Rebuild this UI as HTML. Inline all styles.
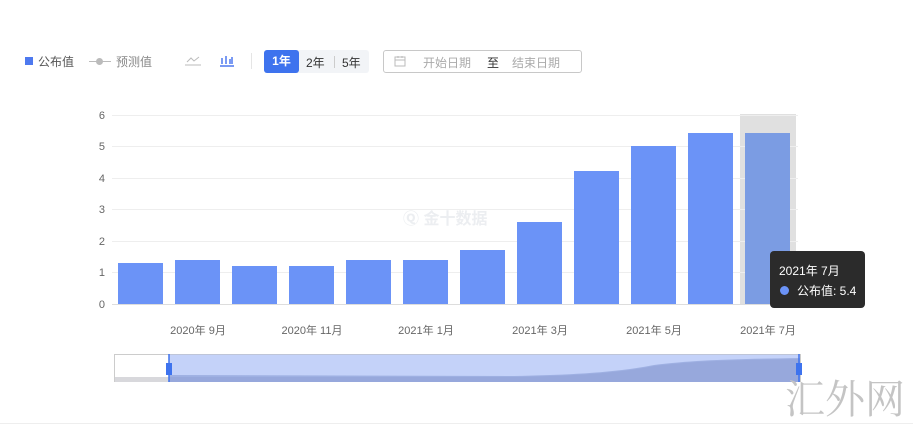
<!DOCTYPE html>
<html><head><meta charset="utf-8"><style>
body{margin:0;width:913px;height:425px;background:#fff;font-family:"Liberation Sans","Noto Sans CJK SC",sans-serif;position:relative;overflow:hidden}
.a{position:absolute}
.t{font-size:12px;color:#555}
.yl{position:absolute;right:808px;font-size:11px;color:#666}
.xl{position:absolute;font-size:11px;color:#666;width:80px;text-align:center;top:322px}
</style></head><body>
<div class="a" style="left:25px;top:57px;width:8px;height:8px;background:#4e79ef"></div>
<div class="a t" style="left:38px;top:53px">公布值</div>
<div class="a" style="left:89px;top:61px;width:22px;height:1px;background:#bbb"></div>
<div class="a" style="left:96px;top:58px;width:7px;height:7px;border-radius:50%;background:#bbb"></div>
<div class="a t" style="left:116px;top:53px;color:#888">预测值</div>
<svg class="a" style="left:184px;top:53px" width="18" height="14"><path d="M1 12h16M3 9l4-4 3 3 5-4" stroke="#bbb" fill="none"/></svg>
<svg class="a" style="left:219px;top:53px" width="16" height="14"><path d="M1 13h14M3 5v6M7 3v8M11 6v5M13 4v7" stroke="#4e79ef" stroke-width="1.5" fill="none"/></svg>
<div class="a" style="left:251px;top:53px;width:1px;height:16px;background:#e5e5e5"></div>
<div class="a" style="left:264px;top:50px;width:105px;height:23px;background:#f2f4f7;border-radius:3px"></div>
<div class="a" style="left:264px;top:50px;width:35px;height:23px;background:#3e73ee;border-radius:3px;color:#fff;font-size:12px;font-weight:bold;text-align:center;line-height:23px">1年</div>
<div class="a t" style="left:306px;top:54px;color:#333">2年</div>
<div class="a" style="left:334px;top:56px;width:1px;height:12px;background:#ccc"></div>
<div class="a t" style="left:342px;top:54px;color:#333">5年</div>
<div class="a" style="left:383px;top:50px;width:197px;height:21px;border:1px solid #c8c8c8;border-radius:3px"></div>
<svg class="a" style="left:394px;top:55px" width="12" height="12"><rect x="1" y="2" width="10" height="9" fill="none" stroke="#bbb"/><path d="M1 5h10M4 1v2M8 1v2" stroke="#bbb"/></svg>
<div class="a t" style="left:423px;top:54px;color:#aaa">开始日期</div>
<div class="a t" style="left:487px;top:54px;color:#333">至</div>
<div class="a t" style="left:512px;top:54px;color:#aaa">结束日期</div>

<div class="a" style="left:740px;top:114px;width:56px;height:190px;background:#e0e0e0"></div>
<div class="a" style="left:112px;top:115px;width:686px;height:1px;background:#eee"></div>
<div class="a" style="left:112px;top:146px;width:686px;height:1px;background:#eee"></div>
<div class="a" style="left:112px;top:178px;width:686px;height:1px;background:#eee"></div>
<div class="a" style="left:112px;top:209px;width:686px;height:1px;background:#eee"></div>
<div class="a" style="left:112px;top:241px;width:686px;height:1px;background:#eee"></div>
<div class="a" style="left:112px;top:272px;width:686px;height:1px;background:#eee"></div>
<div class="a" style="left:112px;top:304px;width:686px;height:1px;background:#ddd"></div>
<div class="yl" style="top:110px">6</div><div class="yl" style="top:141px">5</div><div class="yl" style="top:173px">4</div><div class="yl" style="top:204px">3</div><div class="yl" style="top:236px">2</div><div class="yl" style="top:267px">1</div><div class="yl" style="top:299px">0</div>
<div class="a" style="left:403px;top:205px;font-size:16px;color:#eceef1;font-weight:bold">Ⓠ 金十数据</div>
<div class="a" style="left:118px;top:263px;width:45px;height:41px;background:#6b93f7"></div>
<div class="a" style="left:175px;top:260px;width:45px;height:44px;background:#6b93f7"></div>
<div class="a" style="left:232px;top:266px;width:45px;height:38px;background:#6b93f7"></div>
<div class="a" style="left:289px;top:266px;width:45px;height:38px;background:#6b93f7"></div>
<div class="a" style="left:346px;top:260px;width:45px;height:44px;background:#6b93f7"></div>
<div class="a" style="left:403px;top:260px;width:45px;height:44px;background:#6b93f7"></div>
<div class="a" style="left:460px;top:250px;width:45px;height:54px;background:#6b93f7"></div>
<div class="a" style="left:517px;top:222px;width:45px;height:82px;background:#6b93f7"></div>
<div class="a" style="left:574px;top:171px;width:45px;height:133px;background:#6b93f7"></div>
<div class="a" style="left:631px;top:146px;width:45px;height:158px;background:#6b93f7"></div>
<div class="a" style="left:688px;top:133px;width:45px;height:171px;background:#6b93f7"></div>
<div class="a" style="left:745px;top:133px;width:45px;height:171px;background:#7b9ce3"></div>
<div class="xl" style="left:158px">2020年 9月</div>
<div class="xl" style="left:272px">2020年 11月</div>
<div class="xl" style="left:386px">2021年 1月</div>
<div class="xl" style="left:500px">2021年 3月</div>
<div class="xl" style="left:614px">2021年 5月</div>
<div class="xl" style="left:728px">2021年 7月</div>
<div class="a" style="left:770px;top:251px;width:95px;height:57px;background:#2b2b2b;border-radius:4px"></div>
<div class="a" style="left:779px;top:262px;color:#fff;font-size:12px">2021年 7月</div>
<div class="a" style="left:780px;top:286px;width:9px;height:9px;border-radius:50%;background:#6b93f7"></div>
<div class="a" style="left:797px;top:282px;color:#fff;font-size:12px">公布值: 5.4</div>

<svg class="a" style="left:114px;top:354px" width="690" height="30">
<rect x="0.5" y="0.5" width="686" height="27" fill="#fff" stroke="#ccc"/>
<path d="M1 23 L400 23 C450 22 500 20 540 12 C580 7 620 6 686 5 L686 28 L1 28Z" fill="#d8d8dc"/>
<rect x="55" y="0.5" width="631" height="27.5" fill="#9cb4f5" fill-opacity="0.6"/>
<path d="M55 21 L400 22 C450 21 500 19 540 11 C580 6 620 5 686 4 L686 28 L55 28Z" fill="#7f93cf" fill-opacity="0.55"/>
<path d="M55 0v28M685 0v28" stroke="#3e73ee" stroke-width="1.5"/>
<rect x="52" y="9" width="6" height="12" fill="#3e73ee"/><rect x="682" y="9" width="6" height="12" fill="#3e73ee"/>
</svg>
<div class="a" style="left:785px;top:368px;font-family:'Noto Serif CJK SC',serif;font-size:40px;color:#c4c4c4">汇外网</div>
<div class="a" style="left:0;top:423px;width:913px;height:1px;background:#eee"></div>
</body></html>
